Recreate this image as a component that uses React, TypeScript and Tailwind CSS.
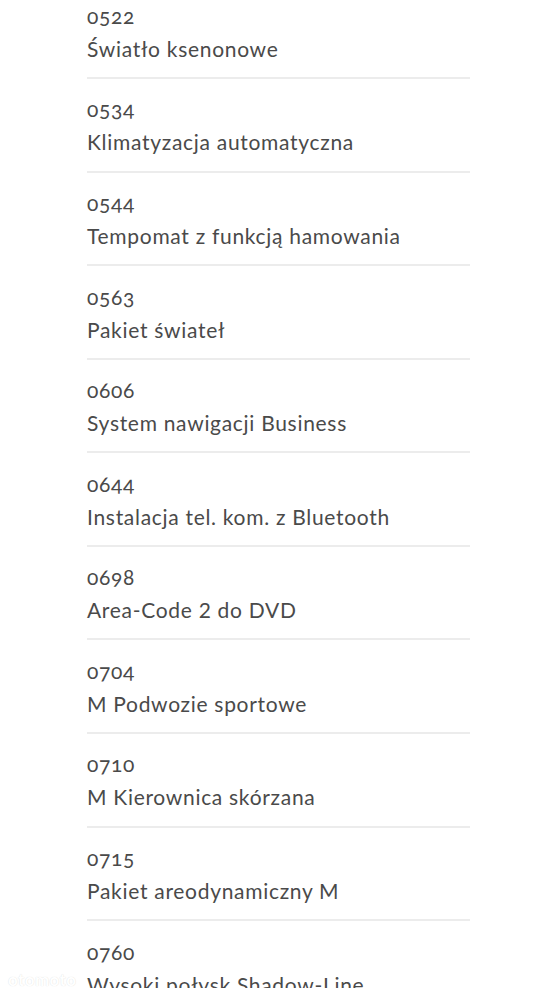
import React from "react";

const items = [
  { code: "0522", name: "Światło ksenonowe" },
  { code: "0534", name: "Klimatyzacja automatyczna" },
  { code: "0544", name: "Tempomat z funkcją hamowania" },
  { code: "0563", name: "Pakiet świateł" },
  { code: "0606", name: "System nawigacji Business" },
  { code: "0644", name: "Instalacja tel. kom. z Bluetooth" },
  { code: "0698", name: "Area-Code 2 do DVD" },
  { code: "0704", name: "M Podwozie sportowe" },
  { code: "0710", name: "M Kierownica skórzana" },
  { code: "0715", name: "Pakiet areodynamiczny M" },
  { code: "0760", name: "Wysoki połysk Shadow-Line" },
];

export default function App() {
  return (
    <div className="relative h-[1000px] overflow-hidden bg-white font-['Lato','Liberation_Sans',sans-serif]">
      <ul className="-mt-[14.6px] pl-[87px] pr-[87px]">
        {items.map((item) => (
          <li
            key={item.code}
            className="border-b-2 border-[#ececec] pt-[13.4px] pb-[12.2px] text-[21px] leading-[33px] tracking-[0.7px] text-[#4a4a4a]"
          >
            <div className="oldstyle-nums">{item.code}</div>
            <div>{item.name}</div>
          </li>
        ))}
      </ul>
      {/* strip that hides the bottom of the last row */}
      <div className="absolute bottom-0 left-0 right-0 h-[12px] bg-white" />
      <div className="absolute left-[8px] bottom-[8px] text-[17px] font-bold tracking-wide text-white [text-shadow:0_0_1px_#d8d8d8]">
        otomoto
      </div>
    </div>
  );
}
